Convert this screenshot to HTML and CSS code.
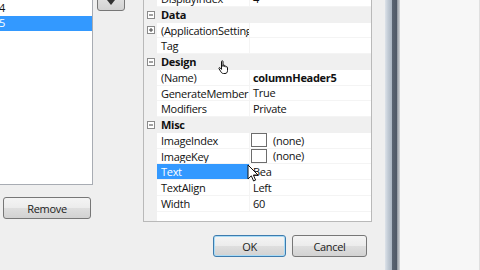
FILE: index.html
```html
<!DOCTYPE html>
<html>
<head>
<meta charset="utf-8">
<link rel="stylesheet" href="styles.css">
</head>
<body>
<div class="dlg">
  <div class="left">
    <div class="list">
      <div class="item"><span>columnHeader3</span></div>
      <div class="item"><span>columnHeader4</span></div>
      <div class="item sel"><span>columnHeader5</span></div>
    </div>
    <div class="btn remove">Remove</div>
  </div>
  <div class="mid">
    <div class="btn small">
      <svg width="10" height="8" viewBox="0 0 10 8"><path d="M1 1 L5 6 L9 1 Z" fill="#333"/></svg>
    </div>
  </div>
  <div class="props">
    <div class="grid">
      <div class="row"><div class="gut"></div><div class="name">DisplayIndex</div><div class="val">4</div></div>
      <div class="row cat"><div class="gut"><svg class="tog" width="8" height="8" viewBox="0 0 8 8"><rect x="0.5" y="0.5" width="7" height="7" fill="#fff" stroke="#8a8a8a"/><path d="M2 4 H6" stroke="#444"/></svg></div><div class="cname">Data</div></div>
      <div class="row"><div class="gut"><svg class="tog" width="8" height="8" viewBox="0 0 8 8"><rect x="0.5" y="0.5" width="7" height="7" fill="#fff" stroke="#8a8a8a"/><path d="M2 4 H6 M4 2 V6" stroke="#444"/></svg></div><div class="name">(ApplicationSettings)</div><div class="val"></div></div>
      <div class="row"><div class="gut"></div><div class="name">Tag</div><div class="val"></div></div>
      <div class="row cat"><div class="gut"><svg class="tog" width="8" height="8" viewBox="0 0 8 8"><rect x="0.5" y="0.5" width="7" height="7" fill="#fff" stroke="#8a8a8a"/><path d="M2 4 H6" stroke="#444"/></svg></div><div class="cname">Design</div></div>
      <div class="row"><div class="gut"></div><div class="name">(Name)</div><div class="val bold">columnHeader5</div></div>
      <div class="row"><div class="gut"></div><div class="name">GenerateMember</div><div class="val">True</div></div>
      <div class="row"><div class="gut"></div><div class="name">Modifiers</div><div class="val">Private</div></div>
      <div class="row cat"><div class="gut"><svg class="tog" width="8" height="8" viewBox="0 0 8 8"><rect x="0.5" y="0.5" width="7" height="7" fill="#fff" stroke="#8a8a8a"/><path d="M2 4 H6" stroke="#444"/></svg></div><div class="cname">Misc</div></div>
      <div class="row"><div class="gut"></div><div class="name">ImageIndex</div><div class="val"><span class="swatch"></span>(none)</div></div>
      <div class="row"><div class="gut"></div><div class="name">ImageKey</div><div class="val"><span class="swatch"></span>(none)</div></div>
      <div class="row"><div class="gut"></div><div class="name selname">Text</div><div class="val">Bea</div></div>
      <div class="row"><div class="gut"></div><div class="name">TextAlign</div><div class="val">Left</div></div>
      <div class="row"><div class="gut"></div><div class="name">Width</div><div class="val">60</div></div>
      <div class="fill"><div class="gut"></div></div>
    </div>
    <div class="actions">
      <div class="btn ok">OK</div>
      <div class="btn cancel">Cancel</div>
    </div>
  </div>
  <div class="frame"></div>
  <div class="outside"></div>

  <svg class="cursor hand" width="12" height="15" viewBox="0 0 12 15">
    <path d="M3.5 1.5 C3.5 0.5 5 0.5 5 1.5 V6.5 V5.5 C5 4.7 6.5 4.7 6.5 5.5 V6.5 C6.5 5.8 8 5.8 8 6.6 V7.2 C8 6.6 9.5 6.6 9.5 7.4 V10.5 C9.5 12.5 8.5 13.5 7 13.5 H5.5 C4 13.5 3.4 12.6 2.5 11.2 L1 8.6 C0.6 7.8 1.6 7.2 2.2 7.9 L3.5 9.4 Z" fill="#fff" stroke="#111" stroke-width="1" stroke-linejoin="round"/>
  </svg>
  <svg class="cursor arrow" width="12" height="19" viewBox="0 0 12 19">
    <path d="M1 1 V15 L4.3 11.8 L6.6 17 L8.6 16.1 L6.4 11 H11 Z" fill="#fff" stroke="#111" stroke-width="1" stroke-linejoin="round"/>
  </svg>
</div>
</body>
</html>
```
FILE: styles.css
```css
html, body {
  margin: 0;
  padding: 0;
  width: 480px;
  height: 270px;
  overflow: hidden;
  background: #efefef;
}
.dlg {
  position: relative;
  display: flex;
  align-items: flex-start;
  width: 480px;
  height: 270px;
  overflow: hidden;
  font-family: "Open Sans", "Noto Sans", sans-serif;
  font-size: 11px;
  letter-spacing: -0.3px;
  color: #111;
}
.left {
  width: 93px;
  flex: none;
  display: flex;
  flex-direction: column;
}
.list {
  margin-left: -100px;
  margin-top: -14px;
  width: 192px;
  height: 198px;
  background: #fff;
  border-right: 1px solid #a8acb3;
  border-bottom: 1px solid #a8acb3;
}
.item {
  height: 15px;
  line-height: 13px;
}
.item span {
  display: inline-block;
  width: 105px;
  text-align: right;
}
.item.sel {
  background: #3399ff;
  color: #fff;
}
.btn {
  box-sizing: border-box;
  border: 1px solid #777;
  border-radius: 3px;
  background: linear-gradient(#f4f4f4, #ececec 48%, #dedede 52%, #d2d2d2);
  display: flex;
  align-items: center;
  justify-content: center;
  color: #222;
}
.remove {
  margin-top: 12px;
  margin-left: 3px;
  width: 88px;
  height: 22px;
}
.mid {
  width: 28px;
  margin-left: 4px;
  flex: none;
}
.small {
  margin-top: -12px;
  height: 23px;
  width: 28px;
  padding-top: 6px;
}
.props {
  margin-left: 18px;
  width: 229px;
  flex: none;
  display: flex;
  flex-direction: column;
}
.grid {
  box-sizing: border-box;
  margin-top: -10px;
  height: 232px;
  border: 1px solid #b9b9b9;
  background: #fff;
  display: flex;
  flex-direction: column;
}
.row {
  height: 15.75px;
  display: flex;
  flex: none;
  line-height: 15px;
}
.gut {
  width: 13px;
  flex: none;
  background: #f0f0f0;
  display: flex;
  align-items: center;
  justify-content: center;
}
.tog {
  display: block;
}
.name {
  box-sizing: border-box;
  width: 93px;
  flex: none;
  padding-left: 4px;
  white-space: nowrap;
  overflow: hidden;
  border-right: 1px solid #f4f4f4;
  border-bottom: 1px solid #f4f4f4;
}
.val {
  flex: 1;
  padding-left: 3px;
  white-space: nowrap;
  overflow: hidden;
  display: flex;
  align-items: center;
  border-bottom: 1px solid #f4f4f4;
}
.bold, .cname {
  font-weight: 700;
}
.cat {
  background: #f0f0f0;
}
.cname {
  padding-left: 4px;
}
.selname {
  background: #3399ff;
  color: #fff;
}
.swatch {
  box-sizing: border-box;
  width: 16px;
  height: 14px;
  border: 1px solid #6d6d6d;
  background: #fff;
  margin-left: -2px;
  margin-right: 6px;
}
.fill {
  flex: 1;
  display: flex;
}
.actions {
  display: flex;
  margin-top: 13px;
  padding-left: 70px;
  gap: 6px;
}
.ok, .cancel {
  height: 22px;
}
.ok {
  width: 73px;
  border-color: #3d7bad;
  box-shadow: inset 0 0 0 1px #a9dbf6;
}
.cancel {
  width: 75px;
}
.frame {
  margin-left: 13px;
  width: 15px;
  height: 270px;
  flex: none;
  background: linear-gradient(90deg, #dde3ea 0, #c3ccd6 3px, #aab5c2 7px, #5b6573 7px, #4f5866 12px, #8c939c 12px, #d7d9dc 15px);
}
.outside {
  flex: 1;
  height: 270px;
  background: #f7f7f7;
  border-right: 1px solid #e0e0e0;
}
.cursor {
  position: absolute;
}
.hand {
  left: 218px;
  top: 60px;
}
.arrow {
  left: 247px;
  top: 164px;
}
```
